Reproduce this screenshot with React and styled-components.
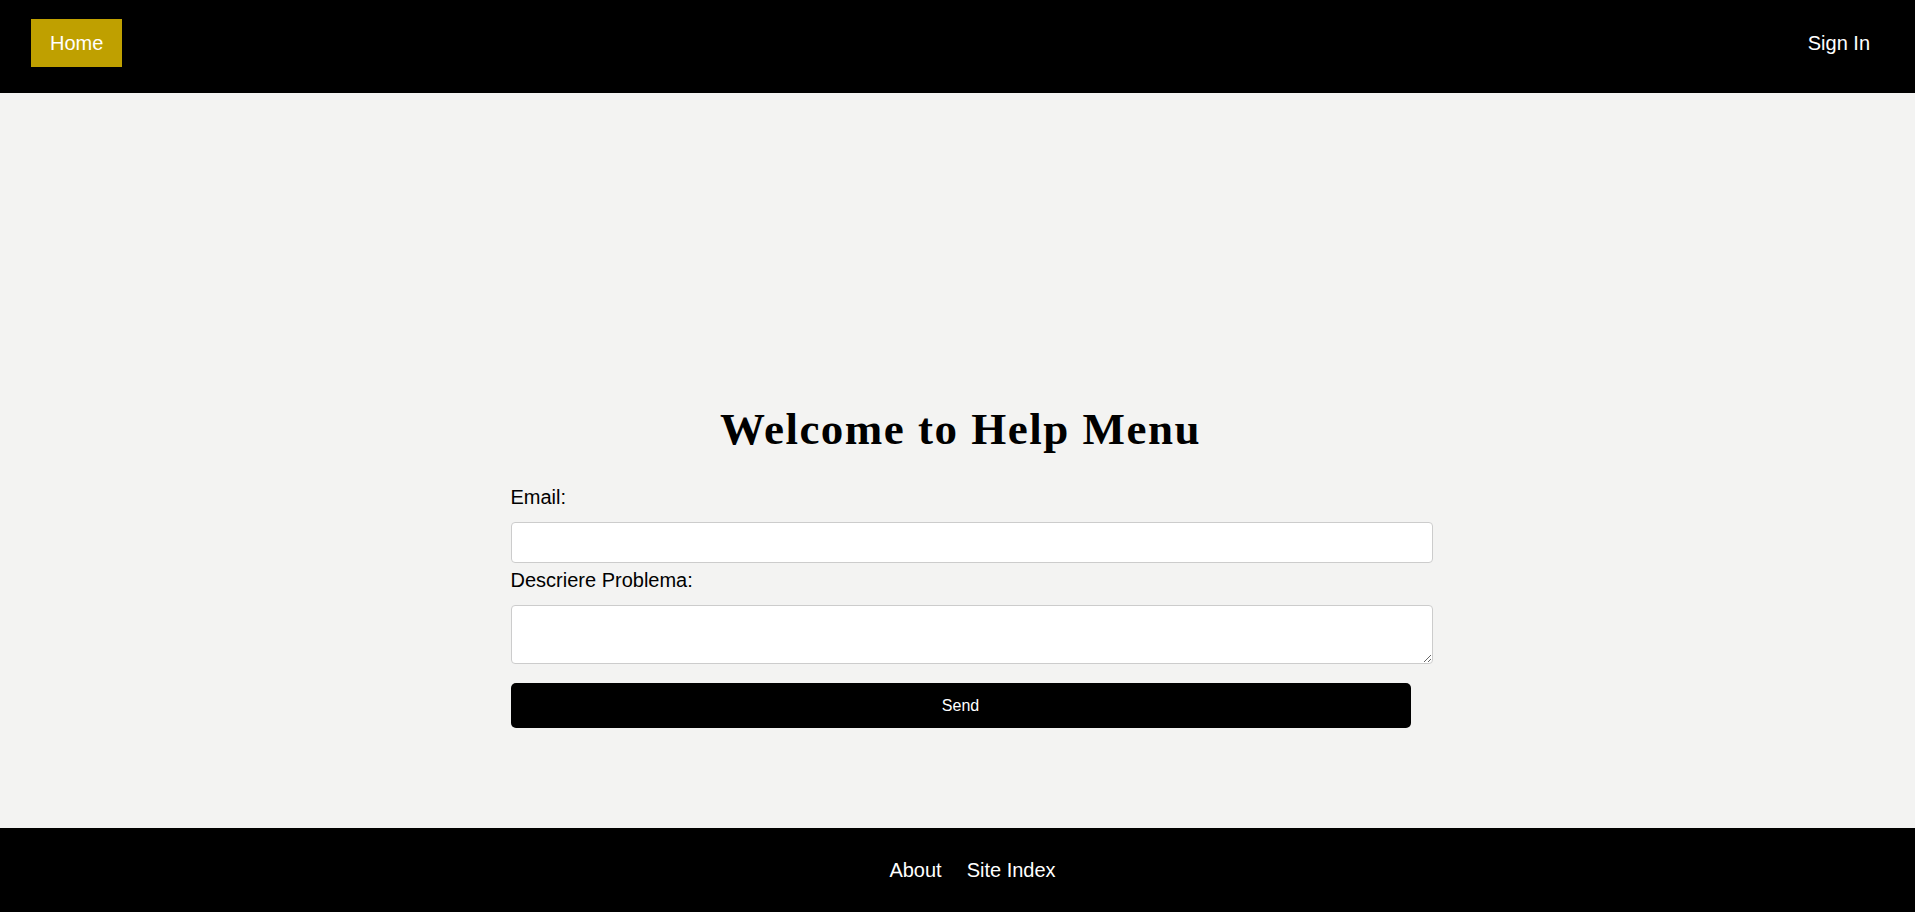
import React from "react";
import styled, { createGlobalStyle } from "styled-components";

const GlobalStyle = createGlobalStyle`
  html, body {
    margin: 0;
    padding: 0;
    background: #f3f3f2;
    font-family: "Liberation Sans", Arial, sans-serif;
  }
  * { box-sizing: border-box; }
`;

const Page = styled.div`
  min-height: 100vh;
  display: flex;
  flex-direction: column;
`;

const Header = styled.header`
  height: 93px;
  background: #000;
  display: flex;
  justify-content: space-between;
  align-items: flex-start;
  padding: 19px 26px 0 31px;
`;

const NavLink = styled.a`
  display: block;
  height: 48px;
  padding: 12.5px 19px;
  font-size: 20px;
  line-height: 23px;
  color: #fff;
  text-decoration: none;
  background: ${(p) => (p.$active ? "#bfa000" : "transparent")};
  cursor: pointer;
`;

const Main = styled.main`
  flex: 1;
  display: flex;
  flex-direction: column;
  align-items: center;
  padding: 310px 0 0 6px;
`;

const Title = styled.h1`
  margin: 0 0 31px;
  font-family: "Liberation Serif", "Times New Roman", serif;
  font-weight: 700;
  font-size: 45px;
  line-height: 52px;
  letter-spacing: 1.5px;
  color: #000;
  text-align: center;
`;

const Form = styled.form`
  width: 900px;
  display: flex;
  flex-direction: column;
  align-items: flex-start;
`;

const Label = styled.label`
  display: block;
  font-size: 20px;
  line-height: 23px;
  color: #000;
  margin-bottom: 13px;
`;

const fieldStyles = `
  box-sizing: content-box;
  width: 100%;
  padding: 10px;
  border: 1px solid #cccccc;
  border-radius: 4px;
  background: #fff;
  font-family: "Liberation Sans", Arial, sans-serif;
  font-size: 16px;
  outline: none;
  display: block;
  margin: 0;
`;

const Input = styled.input`
  ${fieldStyles}
  height: 19px;
  margin-bottom: 6px;
`;

const TextArea = styled.textarea`
  ${fieldStyles}
  height: 37px;
  margin-bottom: 19px;
`;

const SendButton = styled.button`
  width: 100%;
  height: 45px;
  border: none;
  border-radius: 5px;
  background: #000;
  color: #fff;
  font-family: "Liberation Sans", Arial, sans-serif;
  font-size: 16px;
  cursor: pointer;
`;

const Footer = styled.footer`
  height: 84px;
  background: #000;
  display: flex;
  justify-content: center;
  align-items: center;
  padding-left: 5px;
`;

const FooterLink = styled.a`
  margin-left: 25px;
  font-size: 20px;
  line-height: 23px;
  color: #fff;
  text-decoration: none;
  cursor: pointer;
`;

export default function App() {
  return (
    <Page>
      <GlobalStyle />
      <Header>
        <NavLink $active>Home</NavLink>
        <NavLink>Sign In</NavLink>
      </Header>
      <Main>
        <Title>Welcome to Help Menu</Title>
        <Form onSubmit={(e) => e.preventDefault()}>
          <Label htmlFor="email">Email:</Label>
          <Input id="email" type="email" />
          <Label htmlFor="desc">Descriere Problema:</Label>
          <TextArea id="desc" />
          <SendButton type="submit">Send</SendButton>
        </Form>
      </Main>
      <Footer>
        <FooterLink>About</FooterLink>
        <FooterLink>Site Index</FooterLink>
      </Footer>
    </Page>
  );
}
